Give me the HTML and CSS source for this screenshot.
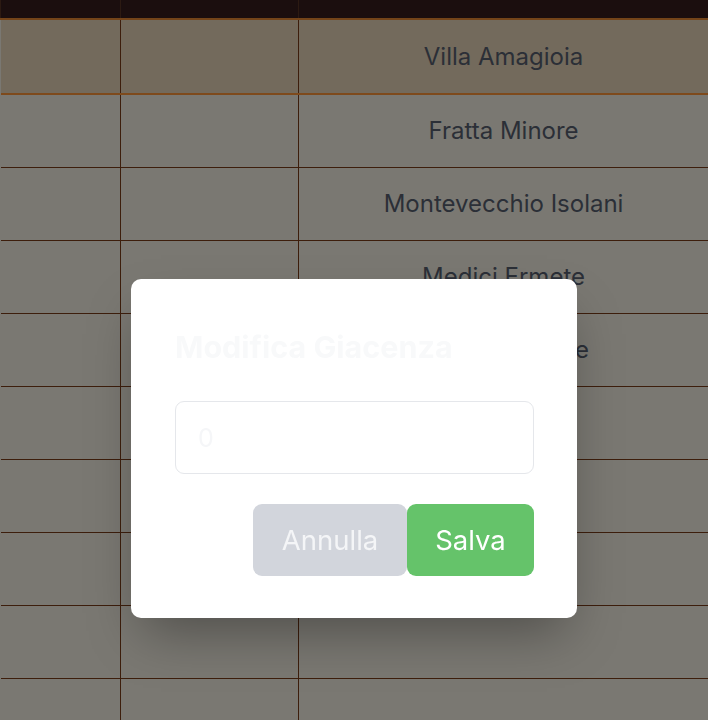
FILE: index.html
```html
<!DOCTYPE html>
<html lang="it">
<head>
<meta charset="utf-8">
<title>Giacenze</title>
<link rel="stylesheet" href="styles.css">
</head>
<body>
<div class="page">
  <table class="grid">
    <thead>
      <tr><th class="c1"></th><th class="c2"></th><th class="c3"></th><th class="c4"></th></tr>
    </thead>
    <tbody>
      <tr class="active"><td></td><td></td><td>Villa Amagioia</td><td></td></tr>
      <tr><td></td><td></td><td>Fratta Minore</td><td></td></tr>
      <tr><td></td><td></td><td>Montevecchio Isolani</td><td></td></tr>
      <tr><td></td><td></td><td>Medici Ermete</td><td></td></tr>
      <tr><td></td><td></td><td>Cantine Riunite</td><td></td></tr>
      <tr><td></td><td></td><td></td><td></td></tr>
      <tr><td></td><td></td><td></td><td></td></tr>
      <tr><td></td><td></td><td></td><td></td></tr>
      <tr><td></td><td></td><td></td><td></td></tr>
      <tr><td></td><td></td><td></td><td></td></tr>
    </tbody>
  </table>
</div>
<div class="overlay">
  <div class="modal">
    <h2 class="modal-title">Modifica Giacenza</h2>
    <input class="modal-input" type="number" placeholder="0">
    <div class="modal-actions">
      <button class="btn btn-cancel">Annulla</button>
      <button class="btn btn-save">Salva</button>
    </div>
  </div>
</div>
</body>
</html>
```
FILE: styles.css
```css
html, body {
  margin: 0;
  padding: 0;
}
body {
  font-family: Inter, "Noto Sans", sans-serif;
  background: #7a7872;
  width: 708px;
  height: 720px;
  overflow: hidden;
}
.page {
  width: 708px;
  overflow: hidden;
}
.grid {
  border-collapse: collapse;
  table-layout: fixed;
  width: 900px;
}
.grid th {
  background: #1b0e0e;
  height: 18px;
  padding: 0;
  border-left: 1px solid #2c1a12;
  border-right: 1px solid #2c1a12;
  border-bottom: 2px solid #744419;
}
.c1 { width: 119px; }
.c2 { width: 177px; }
.c3 { width: 408px; }
.c4 { width: 190px; }
.grid td {
  height: 72px;
  padding: 0;
  border: 1px solid #3d1e0c;
  background: #7a7872;
  text-align: center;
  color: #2b2f37;
  font-size: 24px;
  line-height: 30px;
}
.grid tr.active td {
  height: 73px;
  background: #736a5c;
  border-bottom: 2px solid #7e4a1c;
}
.grid tr:first-child td { border-top: none; }
.grid td:first-child { border-left: none; }
.overlay {
  position: fixed;
  inset: 0;
  display: flex;
  justify-content: center;
  align-items: flex-start;
  padding-top: 279px;
}
.modal {
  width: 446px;
  box-sizing: border-box;
  background: #ffffff;
  border-radius: 10px;
  padding: 44px 43px 42px 44px;
  box-shadow: 0 25px 50px -12px rgba(0, 0, 0, 0.35);
  display: flex;
  flex-direction: column;
}
.modal-title {
  margin: 0;
  font-size: 30.5px;
  line-height: 48px;
  font-weight: 700;
  color: #f8f9fa;
}
.modal-input {
  margin-top: 30px;
  height: 73px;
  box-sizing: border-box;
  border: 1px solid #e5e7eb;
  border-radius: 9px;
  padding: 0 22px;
  font-family: inherit;
  font-size: 25px;
  color: #374151;
  outline: none;
}
.modal-input::placeholder {
  color: #f5f6f8;
}
.modal-actions {
  margin-top: 30px;
  display: flex;
  justify-content: flex-end;
}
.btn {
  height: 72px;
  border: none;
  border-radius: 9px;
  font-family: inherit;
  font-size: 27.5px;
  color: #ffffff;
  padding: 0;
}
.btn-cancel {
  width: 154px;
  background: #d2d5dc;
  color: #f4f5f7;
}
.btn-save {
  width: 127px;
  background: #65c36a;
}
```
